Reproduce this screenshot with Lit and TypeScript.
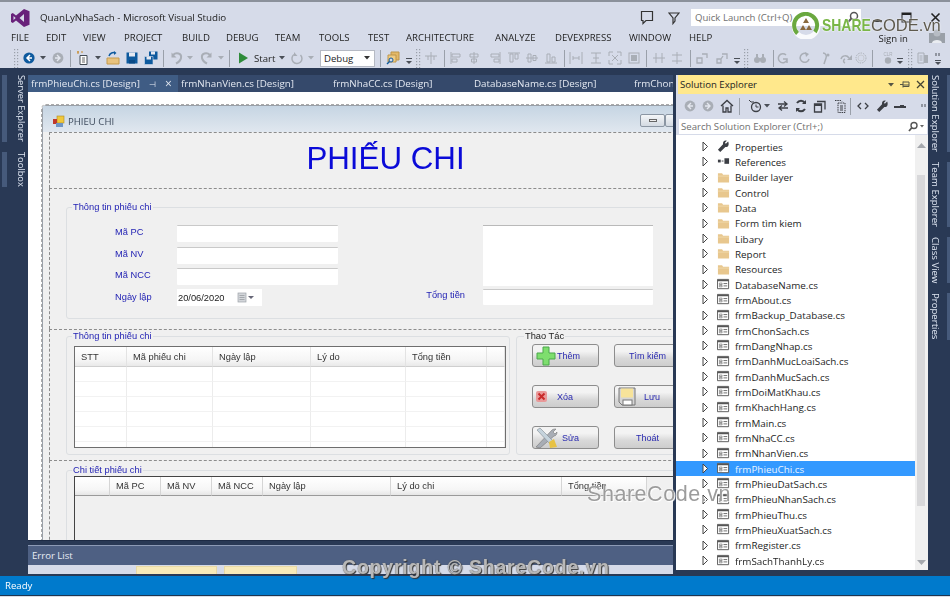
import { LitElement, html, css, svg } from "lit";
import { customElement } from "lit/decorators.js";

const ic = (body: unknown, w = 14, h = 14, vb = "0 0 14 14") =>
  html`<svg width=${w} height=${h} viewBox=${vb} fill="none">${body}</svg>`;

const G = "#a9aeb6", D = "#4a4f57", B = "#0e5a9e", S = "#3c3f45";

const icons: Record<string, unknown> = {
  grip: ic(svg`<g fill="#9aa0aa">${[1, 4, 7, 10, 13, 16, 19].map((y) => svg`<rect x="2" y=${y} width="1.2" height="1.2"/><rect x="5" y=${y} width="1.2" height="1.2"/>`)}</g>`, 8, 20, "0 0 8 20"),
  sep: ic(svg`<rect x="1" y="0" width="1" height="17" fill="#9aa0aa"/>`, 3, 17, "0 0 3 17"),
  arrow: ic(svg`<path d="M1 2h6L4 5.5z" fill="${D}"/>`, 8, 8, "0 0 8 8"),
  arrowG: ic(svg`<path d="M1 2h6L4 5.5z" fill="${G}"/>`, 8, 8, "0 0 8 8"),
  over: ic(svg`<rect x="1" y="7" width="6" height="1" fill="${D}"/><path d="M1 10h6L4 13z" fill="${D}"/>`, 8, 14, "0 0 8 14"),
  back: ic(svg`<circle cx="7" cy="7" r="5.6" fill="${B}"/><path d="M8 4L5 7l3 3M5 7h5" stroke="#fff" stroke-width="1.5"/>`),
  fwd: ic(svg`<circle cx="7" cy="7" r="5.4" fill="${G}"/><path d="M6 4l3 3-3 3M9 7H4" stroke="#e4e7ef" stroke-width="1.4"/>`),
  backG: ic(svg`<circle cx="7" cy="7" r="5.4" fill="${G}"/><path d="M8 4L5 7l3 3M5 7h5" stroke="#e4e7ef" stroke-width="1.4"/>`),
  newp: ic(svg`<path d="M4 4.500h7v9H4z" fill="#fff" stroke="#444c55"/><path d="M6 7h3M6 9h3M6 11h3" stroke="#666"/><path d="M1 1h2M2 0v3M5 1h2" stroke="#c78a2a"/>`),
  open: ic(svg`<path d="M1 7h12v6H1z" fill="#e8c27d" stroke="#c59a4d"/><path d="M3 5c1-3 4-4 6-3" stroke="${B}" stroke-width="1.500"/><path d="M8 0l2.500 2L8 4z" fill="${B}"/>`),
  save: ic(svg`<path d="M1.500 1.500h11v11h-11z" fill="${B}"/><path d="M4 1.500h6v4H4z" fill="#e5e9f2"/><rect x="4" y="9" width="6" height="3.500" fill="#0a4a86"/>`),
  saveall: ic(svg`<path d="M5 .5h8.500v8H5z" fill="${B}"/><path d="M7 .5h4v3H7z" fill="#e5e9f2"/><path d="M.5 5.500h8.500v8H.5z" fill="${B}" stroke="#d6dbe9" stroke-width=".6"/><path d="M2.500 5.500h4.500v3H2.500z" fill="#e5e9f2"/>`),
  undo: ic(svg`<path d="M3 4c3-3 9-2 8 3-.5 3-3 4.500-5 5.500" stroke="${G}" stroke-width="2"/><path d="M1.500 1.500v5h5z" fill="${G}"/>`),
  redo: ic(svg`<path d="M11 4C8 1 2 2 3 7c.5 3 3 4.500 5 5.500" stroke="${G}" stroke-width="2"/><path d="M12.500 1.500v5h-5z" fill="${G}"/>`),
  play: ic(svg`<path d="M3 1.500l9 5.500-9 5.500z" fill="#2e8b3a"/>`),
  refresh: ic(svg`<path d="M10.500 4a5 5 0 1 1-6.500-.5" stroke="${G}" stroke-width="1.500"/><path d="M4 1v4h3.500z" fill="${G}"/>`),
  find: ic(svg`<path d="M5 1h8v8H5z" fill="#e3b868" stroke="#bd9548"/><path d="M2 4h8v7H2z" fill="#eecb85" stroke="#bd9548"/><circle cx="5" cy="9" r="2" fill="#d6dbe9" stroke="${B}"/><path d="M3.500 10.500L1 13" stroke="${B}" stroke-width="1.500"/>`),
  hcross: ic(svg`<path d="M1 5h12M7 1v12M4 5v4M10 5v4" stroke="${G}"/>`),
  al1: ic(svg`<path d="M2 1v12" stroke="${G}"/><path d="M3 3h8v3H3zM3 8h5v3H3z" stroke="${G}"/>`),
  al2: ic(svg`<path d="M7 1v12" stroke="${G}"/><path d="M3 3h8v3H3zM4.500 8h5v3h-5z" stroke="${G}"/>`),
  al3: ic(svg`<path d="M12 1v12" stroke="${G}"/><path d="M3 3h8v3H3zM6 8h5v3H6z" stroke="${G}"/>`),
  al4: ic(svg`<path d="M1 2h12" stroke="${G}"/><path d="M3 3v8h3V3zM8 3v5h3V3z" stroke="${G}"/>`),
  al5: ic(svg`<path d="M1 7h12" stroke="${G}"/><path d="M3 3v8h3V3zM8 4.500v5h3v-5z" stroke="${G}"/>`),
  al6: ic(svg`<path d="M1 12h12" stroke="${G}"/><path d="M3 3v8h3V3zM8 6v5h3V6z" stroke="${G}"/>`),
  sz1: ic(svg`<path d="M1 1v12M13 1v12M4 7h6M4 5v4M10 5v4" stroke="${G}"/>`),
  sz2: ic(svg`<path d="M2 2h10M2 12h10M7 2v10" stroke="${G}"/><path d="M4 7h6" stroke="${G}"/>`),
  sz3: ic(svg`<path d="M1 1h4M1 1v4M13 1H9M13 1v4M1 13h4M1 13V9M13 13H9M13 13V9M4 4l6 6M10 4l-6 6" stroke="${G}"/>`),
  sz4: ic(svg`<rect x="2" y="2" width="10" height="10" stroke="${G}"/><rect x="4" y="4" width="6" height="6" fill="${G}"/>`),
  sp1: ic(svg`<path d="M4 2v10M10 2v10M1 7h12" stroke="${G}"/>`),
  sp2: ic(svg`<path d="M2 4h10M2 10h10M7 1v12" stroke="${G}"/>`),
  tab1: ic(svg`<path d="M2 7h5v5H2zM7 3h5v4" stroke="${G}" stroke-width="1.300"/>`),
  tab2: ic(svg`<path d="M2 8h4v4H2zM7 3h5v5M6 8l2-3" stroke="${G}" stroke-width="1.300"/>`),
  bino: ic(svg`<circle cx="4" cy="9" r="3" fill="${G}"/><circle cx="10" cy="9" r="3" fill="${G}"/><path d="M3 3h2v5H3zM9 3h2v5H9zM5 7h4v2H5z" fill="${G}"/>`),
  g1: ic(svg`<path d="M10 4a4.500 4.500 0 1 0 1 5M7 8h4v4" stroke="${G}" stroke-width="1.500"/>`),
  g2: ic(svg`<path d="M10 3a4.500 4.500 0 1 0 2 5" stroke="${G}" stroke-width="1.500"/><path d="M8 1l4 2-3 3z" fill="${G}"/>`),
  g3: ic(svg`<path d="M6 2a3.500 3.500 0 0 1 3 5L7 13" stroke="${G}" stroke-width="1.500"/><circle cx="11" cy="4" r="1.500" fill="${G}"/>`),
  g4: ic(svg`<path d="M2 8c1-4 6-4 8-1M6 12c-2-1-2-3 0-4" stroke="${G}" stroke-width="1.500"/><path d="M13 4v5H8z" fill="${G}"/>`),
  g5: ic(svg`<circle cx="7" cy="7" r="5" stroke="${G}" stroke-dasharray="1.500 1"/><circle cx="7" cy="7" r="3" stroke="#c6cad2"/>`),
  clr: ic(svg`<text x="7" y="4.500" font-size="4.500" font-family="Liberation Sans" fill="${G}" text-anchor="middle">CLR</text><circle cx="7" cy="9.500" r="3.200" fill="${G}"/>`),
  doc2: ic(svg`<path d="M2 2h6v10H2z" stroke="${G}"/><path d="M8 4h4v8H8z" fill="${G}"/><path d="M3.500 5h3M3.500 7h3M3.500 9h3" stroke="${G}"/>`),
  dots: ic(svg`<path d="M2 2v3M5 2v3" stroke="${D}"/><rect x="1" y="9" width="6" height="1" fill="${D}"/><path d="M1 11h6l-3 3z" fill="${D}"/>`, 8, 15, "0 0 8 15"),
  home: ic(svg`<path d="M1 7l6-5.500L13 7M3 6.500V13h3V9h2v4h3V6.500" stroke="${S}" stroke-width="1.300"/>`),
  hist: ic(svg`<circle cx="8" cy="8" r="4.500" stroke="${S}" stroke-width="1.300"/><path d="M8 5.500V8h2.500M1 1l2 2h3" stroke="${S}"/>`),
  sync: ic(svg`<path d="M2 5h8M8 2.500L11 5 8 7.500M12 9H4M6 6.500L3 9l3 2.500" stroke="${S}" stroke-width="1.300"/>`),
  rf: ic(svg`<path d="M3 4c2-3 6-3 8 0M11 10c-2 3-6 3-8 0" stroke="${S}" stroke-width="2"/><path d="M12 1v4H8zM2 13V9h4z" fill="${S}"/>`),
  cp: ic(svg`<path d="M1.500 5h7v8h-7zM4 2.500h8v8" stroke="${S}" stroke-width="1.300"/><path d="M2 5h6v2H2z" fill="${S}"/>`),
  docs: ic(svg`<path d="M2 1.500h6l1 1M5 4h7v9.500H5z" stroke="${S}" stroke-dasharray="1.500 .8"/><path d="M7 7h3M7 9h3M7 11h3" stroke="${S}"/>`),
  code: ic(svg`<path d="M5 4L2 7l3 3M9 4l3 3-3 3" stroke="${S}" stroke-width="1.300"/>`),
  dash: ic(svg`<rect x="1" y="7" width="12" height="2" fill="${S}"/><rect x="7" y="6" width="4" height="1" fill="${S}"/>`),
  quote: ic(svg`<path d="M2 2v3M5 2v3" stroke="${D}"/>`, 8, 8, "0 0 8 8"),
};

const wrench = ic(svg`<path d="M12 1.500L9.500 4 8.500 3l2-2.200C8 0 6 2 6.500 4.500L1 10.500 3.500 13 9 7.500c3 .5 4.500-2.500 3-6z" fill="${S}"/>`, 13, 13);
icons.wr = wrench;

const toolbar: [number, string][] = [
  [12, "grip"], [22, "back"], [39, "arrow"], [51, "fwd"], [69, "sep"], [76, "newp"], [94, "arrow"], [106, "open"], [125, "save"], [144, "saveall"], [162, "sep"],
  [170, "undo"], [186, "arrowG"], [199, "redo"], [217, "arrowG"], [228, "sep"], [236, "play"],
];
const toolbar2: [number, string][] = [[278, "arrow"], [290, "refresh"], [307, "arrowG"]];
const toolbar3: [number, string][] = [
  [379, "sep"], [386, "find"], [405, "over"], [414, "grip"], [424, "hcross"], [443, "sep"], [449, "al1"], [467, "al2"], [488, "al3"], [507, "al4"], [525, "al5"], [544, "al6"],
  [563, "sep"], [569, "sz1"], [589, "sz2"], [608, "sz3"], [627, "sz4"], [645, "sep"], [652, "sp1"], [670, "sp2"], [689, "sep"], [695, "tab1"], [715, "tab2"], [733, "over"], [742, "grip"], [753, "bino"],
  [772, "sep"], [776, "g1"], [797, "g2"], [817, "g3"], [839, "g4"], [854, "g5"], [871, "sep"], [881, "clr"], [896, "over"], [906, "grip"], [916, "doc2"], [934, "dots"],
];
const seBar: [number, string][] = [
  [683, "backG"], [701, "fwd"], [720, "home"], [738, "sep"], [748, "hist"], [763, "arrow"], [776, "sync"], [794, "rf"], [813, "cp"], [833, "docs"], [849, "sep"], [856, "code"], [876, "wr"], [893, "dash"], [920, "quote"],
];

const menus: [string, number][] = [["FILE", 35], ["EDIT", 37], ["VIEW", 41], ["PROJECT", 58], ["BUILD", 44], ["DEBUG", 49], ["TEAM", 44], ["TOOLS", 49], ["TEST", 38], ["ARCHITECTURE", 89], ["ANALYZE", 60], ["DEVEXPRESS", 74], ["WINDOW", 60], ["HELP", 40]];

const folders = ["Builder layer", "Control", "Data", "Form tìm kiem", "Libary", "Report", "Resources"];
const files = ["DatabaseName.cs", "frmAbout.cs", "frmBackup_Database.cs", "frmChonSach.cs", "frmDangNhap.cs", "frmDanhMucLoaiSach.cs", "frmDanhMucSach.cs", "frmDoiMatKhau.cs", "frmKhachHang.cs", "frmMain.cs", "frmNhaCC.cs", "frmNhanVien.cs", "frmPhieuChi.cs", "frmPhieuDatSach.cs", "frmPhieuNhanSach.cs", "frmPhieuThu.cs", "frmPhieuXuatSach.cs", "frmRegister.cs", "frmSachThanhLy.cs"];

const refs = ic(svg`<rect x="1" y="5" width="3" height="3" fill="${S}"/><rect x="5" y="6" width="2" height="1" fill="${S}"/><rect x="8" y="3.500" width="5" height="6" fill="${S}"/>`, 13, 13);
const folder = ic(svg`<path d="M1 2.500h4.500l1 1.500H13v8.500H1z" fill="#e8c78e"/><path d="M1 5.500h12" stroke="#f0d9ad"/>`, 13, 13);
const formIcon = ic(svg`<path d="M.5 1.500h12v10H.5z" fill="#fff" stroke="#555"/><path d="M.5 2h12v1.500H.5z" fill="#555"/><path d="M2.500 5.500h3v1.500h-3zM2.500 8h3v1.500h-3z" stroke="#666" stroke-width=".7"/><path d="M7 6h4M7 8.500h4" stroke="#666"/>`, 13, 13);
const expand = ic(svg`<path d="M2 1l4.500 4.500L2 10z" fill="#fff" stroke="#444"/>`, 8, 11, "0 0 8 11");

@customElement("app-root")
export class AppRoot extends LitElement {
  static styles = css`
    :host { display: block; width: 950px; height: 597px; overflow: hidden; position: relative; background: #293955; font-family: "Open Sans", "Noto Sans", sans-serif; color: #1e1e1e; }
    .win { width: 950px; height: 597px; display: flex; flex-direction: column; filter: blur(0.35px); }
    .top { height: 66px; background: #d6dbe9; border-top: 2px solid #8b919b; display: flex; flex-direction: column; flex: none; }
    .titlebar { height: 25px; padding-top: 6px; display: flex; align-items: center; position: relative; box-sizing: border-box; }
    .logo { margin-left: 11px; width: 19px; height: 18px; }
    .ttl { margin-left: 10px; font-size: 9.8px; letter-spacing: -0.05px; color: #1e1e1e; }
    .tbright { margin-left: auto; display: flex; align-items: center; }
    .ql { width: 170px; height: 17px; background: #fff; box-sizing: border-box; font-size: 9.6px; color: #717171; padding-left: 4px; display: flex; align-items: center; justify-content: space-between; padding-right: 2px; margin-left: 11px; margin-right: 11px; }
    .winbtns { display: flex; gap: 18px; padding-right: 9px; }
    .winbtns svg { display: block; }
    .menu { height: 21px; display: flex; align-items: center; padding-left: 11px; font-size: 9.6px; color: #1e1e1e; position: relative; }
    .menu span { flex: none; }
    .menu .signin { margin-left: auto; margin-right: 42px; margin-top: 2px; }
    .avatar { position: absolute; right: 5px; top: 2px; }
    .tools { height: 20px; display: flex; align-items: center; position: relative; }
    .ti { flex: none; display: flex; align-items: center; }
    .ti svg { display: block; }
    .pad { flex: none; }
    .start { flex: none; font-size: 9.6px; width: 24px; }
    .combo { flex: none; box-sizing: border-box; width: 55px; height: 17px; background: #fff; border: 1px solid #b6bac4; font-size: 9.6px; display: flex; align-items: center; justify-content: space-between; padding: 0 3px; }
    .main { flex: 1; display: flex; min-height: 0; }
    .rail { background: #293955; flex: none; color: #dfe6f2; display: flex; flex-direction: column; padding-top: 7px; }
    .rail.l { width: 28px; align-items: stretch; gap: 10px; font-size: 9.3px; }
    .rail.r { width: 22px; gap: 10px; font-size: 9.6px; }
    .rt { writing-mode: vertical-rl; display: block; line-height: 13px; white-space: nowrap; }
    .rail.l .rt { border-left: 5px solid #465a7b; padding-left: 1px; margin-left: 2px; }
    .rail.r .rt { border-right: 3px solid #465a7b; padding-right: 5px; box-sizing: border-box; width: 22px; }
    .center { width: 645px; padding-top: 7px; flex: none; display: flex; flex-direction: column; box-sizing: border-box; }
    .tabs { height: 17px; background: #35496b; display: flex; align-items: center; font-size: 9.8px; color: #e4e9f2; flex: none; overflow: hidden; white-space: nowrap; }
    .tab { flex: none; box-sizing: border-box; padding-left: 3px; height: 17px; display: flex; align-items: center; }
    .tab.on { background: #3f5c84; width: 150px; }
    .pin { margin-left: 9px; font-size: 8px; }
    .cl { margin-left: 9px; font-size: 12px; line-height: 10px; }
    .design { height: 448px; background: #fff; flex: none; overflow: hidden; padding: 13px 0 0 14px; box-sizing: border-box; }
    .form { width: 760px; height: 500px; background: #f0f0f0; border: 1px solid #9aa0a8; border-radius: 4px 0 0 0; outline: 1px dashed #aaa; box-sizing: border-box; font-family: "Liberation Sans", Arial, sans-serif; font-size: 9.3px; }
    .fhead { height: 26px; background: linear-gradient(#c6d5e3, #e0e7ef); display: flex; align-items: center; padding: 4px 0 0 9px; gap: 3px; color: #3d4a5c; font-family: "Open Sans", sans-serif; font-size: 9.6px; position: relative; box-sizing: border-box; }
    .fbtn { position: absolute; left: 597px; top: 8px; width: 25px; height: 13px; border: 1px solid #8b96a3; border-radius: 2px; background: linear-gradient(#f4f6f8, #d3dae2); display: flex; align-items: center; justify-content: center; box-sizing: border-box; }
    .fbtn::after { content: ""; width: 8px; height: 3px; border: 1px solid #666; box-sizing: border-box; background: #eee; }
    .fbtn.b2 { left: 622px; }
    .fbody { padding-left: 6px; }
    .panel { border: 1px dashed #8c8c8c; border-right: 0; box-sizing: border-box; border-bottom: 0; }
    .p1 { height: 56px; display: block; }
    .heading { width: 671px; text-align: center; color: #0a0ad8; font-size: 31.3px; line-height: 52px; }
    .p2 { height: 141px; padding: 12px 0 0 16px; }
    .p3 { height: 131px; padding: 0 0 0 16px; display: flex; gap: 6px; }
    .p4 { height: 90px; padding: 3px 0 0 16px; }
    fieldset { margin: 0; border: 1px solid #dcdfe2; border-radius: 3px; box-sizing: border-box; padding: 0; min-width: 0; }
    legend { font-size: 9.3px; line-height: 12px; padding: 0 1px; margin-left: 5px; color: #2323b4; }
    legend.dk { color: #222; margin-left: 7px; }
    .g1 { width: 650px; height: 118px; }
    .g1i { padding: 12px 0 0 48px; display: grid; grid-template-columns: 62px 161px 145px 170px; grid-template-rows: 22px 21px 21px 17px; }
    .lb { color: #2323b4; line-height: 13px; padding-top: 1px; }
    .lb.r4 { padding-top: 2px; }
    .tx { background: #fff; height: 17px; border-top: 1px solid #c9c9c9; border-radius: 1px; box-sizing: border-box; }
    .area { grid-column: 4; grid-row: 1 / 4; height: 61px; background: #fff; border-top: 1px solid #b9b9b9; box-sizing: border-box; }
    .date { width: 85px; height: 17px; background: #fff; display: flex; align-items: center; color: #222; padding-left: 1px; box-sizing: border-box; gap: 12px; }
    .date svg { display: block; }
    .lb.tl { text-align: right; padding: 0 18px 0 0; grid-column: 3; grid-row: 4; }
    .r4 { grid-row: 4; }
    .g2 { width: 444px; height: 125px; flex: none; }
    .g2i { padding: 4px 0 0 7px; }
    .g3 { width: 170px; height: 125px; flex: none; }
    .g3i { padding: 2px 0 0 15px; display: grid; grid-template-columns: 67px 67px; column-gap: 15px; grid-template-rows: 23px 23px 23px; row-gap: 18px; }
    table { border-collapse: separate; border-spacing: 0; table-layout: fixed; background: #fff; color: #333; }
    .t1 { width: 432px; height: 102px; border: 1px solid #6e6e6e; }
    td, th { padding: 0 0 0 6px; font-weight: 400; text-align: left; border-right: 1px solid #ececec; border-bottom: 1px solid #f2f2f2; box-sizing: border-box; height: 15px; }
    th { height: 20px; background: linear-gradient(#fff, #f5f5f5 70%, #e9e9e9); border-bottom: 1px solid #cfcfcf; border-right: 1px solid #e3e3e3; white-space: nowrap; overflow: hidden; }
    .t1 tr.f td { height: auto; border-bottom: 0; }
    .btn { box-sizing: border-box; border: 1px solid #8d8d8d; border-radius: 3px; background: linear-gradient(#f3f3f3 30%, #d8d8d8 65%, #cdcdcd); color: #2a2ab0; display: flex; align-items: center; font-size: 9px; }
    .btn.c { justify-content: center; }
    .btn svg { display: block; flex: none; }
    .b-add { padding-left: 3px; gap: 1px; }
    .b-del { padding-left: 3px; gap: 10px; }
    .b-save { padding-left: 3px; gap: 8px; }
    .b-edit { padding-left: 1px; gap: 4px; }
    .dg { margin-left: 7px; width: 700px; height: 70px; background: #f0f0f0; border-left: 1px solid #444; border-top: 1px solid #444; display: block; }
    .dg th { height: 19px; background: linear-gradient(#fff, #f6f6f6 70%, #e6e6e6); border-bottom: 1px solid #9a9a9a; border-right: 1px solid #d5d5d5; }
    .g4 { width: 650px; height: 90px; overflow: hidden; }
    .gap1 { height: 5px; background: #293955; flex: none; border-top: 1px solid #1c2a44; box-sizing: border-box; }
    .err { height: 20px; background: #4e6083; border-top: 1px solid #8c9ab5; box-sizing: border-box; color: #e8edf5; font-size: 9.6px; display: flex; align-items: center; padding-left: 4px; flex: none; }
    .errl { height: 9px; background: #d6dbe9; flex: none; display: flex; padding-left: 108px; gap: 7px; }
    .errl i { display: block; height: 8px; background: #f8eab9; border: 1px solid #e8d9a4; border-bottom: 0; box-sizing: border-box; margin-top: 1px; }
    .errl i:nth-child(1) { width: 81px; }
    .errl i:nth-child(2) { width: 73px; }
    .se { width: 255px; flex: none; box-sizing: border-box; padding: 7px 0 0 3px; display: flex; flex-direction: column; height: 507px; }
    .sein { background: #d6dbe9; flex: none; height: 495px; display: flex; flex-direction: column; }
    .setitle { height: 19px; background: #ffe88c; flex: none; display: flex; align-items: center; font-size: 9.6px; padding-left: 2px; color: #222; margin-left: 2px; }
    .setitle .ctl { margin-left: auto; display: flex; align-items: center; gap: 5px; padding-right: 3px; }
    .setitle svg { display: block; }
    .setb { height: 24px; flex: none; display: flex; align-items: center; margin-left: 2px; }
    .search { height: 17px; background: #fff; flex: none; margin-left: 2px; font-size: 9.6px; color: #6f6f6f; display: flex; align-items: center; padding: 0 3px; justify-content: space-between; box-shadow: inset 0 0 0 1px #d6dbe9; }
    .tree { flex: 1; display: flex; min-height: 0; background: #fff; }
    .rows { flex: 1; padding-top: 4px; min-width: 0; font-size: 9.85px; color: #1e1e1e; }
    .row { height: 15.33px; display: flex; align-items: center; padding-left: 25px; white-space: nowrap; }
    .row svg { display: block; }
    .row .ar { width: 16px; flex: none; }
    .row .ico { width: 18px; flex: none; }
    .row.sel { background: #3399ff; color: #eaf4ff; }
    .sb { width: 13px; flex: none; background: #f0f0f0; display: flex; flex-direction: column; align-items: center; justify-content: space-between; position: relative; padding: 8px 0 5px; box-sizing: border-box; }
    .thumb { position: absolute; left: 2px; right: 3px; top: 40px; height: 331px; background: #d8d8da; }
    .status { height: 19px; flex: none; background: #007acc; color: #fff; font-size: 9.6px; display: flex; align-items: center; padding-left: 5px; }
    .foot { height: 2px; flex: none; background: #d9dde6; border-top: 1px solid #1d3550; box-sizing: border-box; }
    .wm { position: absolute; font-family: "Liberation Sans", Arial, sans-serif; white-space: nowrap; }
    .wm1 { left: 587px; top: 482px; font-size: 21.5px; letter-spacing: .55px; color: #9c9c9c; text-shadow: 0 0 2px #fff, 1px 1px 1px #fff; }
    .wm2 { left: 342px; top: 556px; font-size: 19.5px; font-weight: 700; letter-spacing: .8px; color: #b8b8b8; text-shadow: 0 0 1px #555, 1px 1px 1px #333; }
    .mark { position: absolute; left: 792px; top: 12px; display: flex; align-items: center; font-family: "Liberation Sans", Arial, sans-serif; height: 27px; }
    .mark b { display: inline-block; color: #7ab648; font-size: 17px; font-weight: 700; text-shadow: 0 0 2px #fff, 0 0 2px #fff; transform: scaleX(.82); transform-origin: left center; margin-right: -10.5px; }
    .mark span { color: #5e5a4e; font-size: 16.5px; text-shadow: 0 0 2px #fff; }
  `;

  private ti(list: [number, string][], end: number) {
    return list.map(([x, n], i) => {
      const next = i + 1 < list.length ? list[i + 1][0] : end;
      return html`<span class="ti" style="width:${next - x}px">${icons[n]}</span>`;
    });
  }

  render() {
    const rows = (n: number) => Array.from({ length: n });
    return html`
      <div class="win">
        <div class="top">
          <div class="titlebar">
            <svg class="logo" viewBox="0 0 19 18"><path d="M13 0l5.500 2.200v13.600L13 18l-8-6.500L1.800 14 0 13V5l1.800-1L5 6.500zM13 5L8.500 9l4.500 4zM2.500 7v4l2.200-2z" fill="#68217a" fill-rule="evenodd"/></svg>
            <span class="ttl">QuanLyNhaSach - Microsoft Visual Studio</span>
            <span class="tbright">
              <svg width="14" height="15" viewBox="0 0 14 15" fill="none"><path d="M1.500 1.500h11v9H6l-3 3v-3H1.500z" stroke="#333" stroke-width="1.200"/></svg>
              <svg style="margin-left:14px" width="12" height="14" viewBox="0 0 12 14" fill="none"><path d="M1 2h10L7 7v3L5 12.500V7z" stroke="#333" stroke-width="1.200"/></svg>
              <span class="ql">Quick Launch (Ctrl+Q)<svg width="13" height="13" viewBox="0 0 13 13" fill="none"><circle cx="8" cy="5" r="3.500" stroke="#555" stroke-width="1.500"/><path d="M5.500 7.500L1.500 11.500" stroke="#555" stroke-width="2"/></svg></span>
              <span class="winbtns">
                <svg width="11" height="11" viewBox="0 0 11 11"><rect x="1" y="8" width="9" height="2" fill="#222"/></svg>
                <svg width="11" height="11" viewBox="0 0 11 11" fill="none"><rect x="1" y="1" width="9" height="9" stroke="#222"/><rect x="1" y="1" width="9" height="2" fill="#222"/></svg>
                <svg width="11" height="11" viewBox="0 0 11 11" fill="none"><path d="M1.500 1.500l8 8M9.500 1.500l-8 8" stroke="#222" stroke-width="1.600"/></svg>
              </span>
            </span>
          </div>
          <div class="menu">
            ${menus.map(([m, w]) => html`<span style="width:${w}px">${m}</span>`)}
            <span class="signin">Sign in</span>
            <svg class="avatar" width="16" height="14" viewBox="0 0 16 14"><rect x="0" y="4" width="16" height="10" fill="#9aa0a8"/><circle cx="8" cy="4" r="3.500" fill="#b7bcc4"/><path d="M3 14c0-4 10-4 10 0z" fill="#e9ecf1"/></svg>
          </div>
          <div class="tools">
            <span class="pad" style="width:12px"></span>
            ${this.ti(toolbar, 254)}
            <span class="start">Start</span>
            ${this.ti(toolbar2, 320)}
            <span class="combo">Debug<svg width="8" height="8" viewBox="0 0 8 8"><path d="M1 2h6L4 5.500z" fill="#333"/></svg></span>
            <span class="pad" style="width:4px"></span>
            ${this.ti(toolbar3, 942)}
          </div>
        </div>
        <div class="main">
          <div class="rail l">
            <span class="rt">Server Explorer</span>
            <span class="rt">Toolbox</span>
          </div>
          <div class="center">
            <div class="tabs">
              <span class="tab on">frmPhieuChi.cs [Design]<span class="pin">⊣</span><span class="cl">×</span></span>
              <span class="tab" style="width:152px">frmNhanVien.cs [Design]</span>
              <span class="tab" style="width:141px">frmNhaCC.cs [Design]</span>
              <span class="tab" style="width:160px">DatabaseName.cs [Design]</span>
              <span class="tab">frmChonSach.cs</span>
            </div>
            <div class="design">
              <div class="form">
                <div class="fhead">
                  <svg width="13" height="13" viewBox="0 0 13 13"><rect x="5" y="1" width="7" height="7" fill="#f0c83c" stroke="#b08a20" stroke-width=".6"/><rect x="1" y="4" width="4" height="5" fill="#c0392b"/><rect x="4" y="8" width="7" height="4" fill="#6f95c4"/></svg>
                  <span>PHIEU CHI</span>
                  <span class="fbtn"></span><span class="fbtn b2"></span>
                </div>
                <div class="fbody">
                  <div class="panel p1"><div class="heading">PHIẾU CHI</div></div>
                  <div class="panel p2">
                    <fieldset class="g1">
                      <legend>Thông tin phiếu chi</legend>
                      <div class="g1i">
                        <span class="lb">Mã PC</span><span class="tx"></span><span class="area"></span>
                        <span class="lb" style="grid-row:2;grid-column:1">Mã NV</span><span class="tx" style="grid-row:2;grid-column:2"></span>
                        <span class="lb" style="grid-row:3;grid-column:1">Mã NCC</span><span class="tx" style="grid-row:3;grid-column:2"></span>
                        <span class="lb r4" style="grid-column:1">Ngày lập</span>
                        <span class="date r4" style="grid-column:2">20/06/2020
                          <svg width="18" height="11" viewBox="0 0 18 11"><rect x="1" y="1" width="8" height="9" fill="#d3d6da" stroke="#9ea3a9" stroke-width=".7"/><path d="M2.500 3.500h5M2.500 5.500h5M2.500 7.500h5" stroke="#8f949a" stroke-width=".7"/><path d="M11 4h6l-3 3z" fill="#667"/></svg>
                        </span>
                        <span class="lb tl">Tổng tiền</span>
                        <span class="tx r4" style="grid-column:4;height:16px"></span>
                      </div>
                    </fieldset>
                  </div>
                  <div class="panel p3">
                    <fieldset class="g2">
                      <legend>Thông tin phiếu chi</legend>
                      <div class="g2i">
                        <table class="t1">
                          <colgroup><col style="width:52px"/><col style="width:86px"/><col style="width:98px"/><col style="width:95px"/><col style="width:81px"/><col style="width:18px"/></colgroup>
                          <tr><th>STT</th><th>Mã phiếu chi</th><th>Ngày lập</th><th>Lý do</th><th>Tổng tiền</th><th></th></tr>
                          ${rows(5).map(() => html`<tr><td></td><td></td><td></td><td></td><td></td><td></td></tr>`)}
                          <tr class="f"><td></td><td></td><td></td><td></td><td></td><td></td></tr>
                        </table>
                      </div>
                    </fieldset>
                    <fieldset class="g3">
                      <legend class="dk">Thao Tác</legend>
                      <div class="g3i">
                        <span class="btn b-add"><svg width="20" height="20" viewBox="0 0 20 20"><path d="M7 1h6v6h6v6h-6v6H7v-6H1V7h6z" fill="#7ede6e" stroke="#4aa84a"/></svg>Thêm</span>
                        <span class="btn c">Tìm kiếm</span>
                        <span class="btn b-del"><svg width="11" height="11" viewBox="0 0 11 11"><rect x="0" y="0" width="11" height="11" rx="2" fill="#e99a9a"/><path d="M2.500 2.500l6 6M8.500 2.500l-6 6" stroke="#c92b2b" stroke-width="2"/></svg>Xóa</span>
                        <span class="btn b-save"><svg width="18" height="19" viewBox="0 0 18 19"><path d="M1 1h16v17H4l-3-3z" fill="#d5d5d5" stroke="#777"/><rect x="3" y="1.500" width="12" height="9" fill="#f7e39a"/><rect x="5" y="13" width="9" height="5" fill="#fff" stroke="#777"/></svg>Lưu</span>
                        <span class="btn b-edit"><svg width="24" height="22" viewBox="0 0 24 22"><path d="M2 20L18 3c1-1 3-1 4-1l-3 3 2 2 2-2c0 2-1 4-3 4L6 21z" fill="#a8adb5" stroke="#777" stroke-width=".6"/><path d="M3 3l3-2 14 14-3 3z" fill="#c5d3dc" stroke="#7f8a92" stroke-width=".6"/><path d="M15 15l5-3 3 8-7 1z" fill="#e7c244"/></svg>Sửa</span>
                        <span class="btn c">Thoát</span>
                      </div>
                    </fieldset>
                  </div>
                  <div class="panel p4">
                    <fieldset class="g4">
                      <legend>Chi tiết phiếu chi</legend>
                      <table class="dg">
                        <colgroup><col style="width:35px"/><col style="width:51px"/><col style="width:51px"/><col style="width:51px"/><col style="width:128px"/><col style="width:171px"/><col style="width:85px"/></colgroup>
                        <tr><th></th><th>Mã PC</th><th>Mã NV</th><th>Mã NCC</th><th>Ngày lập</th><th>Lý do chi</th><th>Tổng tiền</th></tr>
                      </table>
                    </fieldset>
                  </div>
                </div>
              </div>
            </div>
            <div class="gap1"></div>
            <div class="err">Error List</div>
            <div class="errl"><i></i><i></i></div>
          </div>
          <div class="se">
            <div class="sein">
              <div class="setitle">Solution Explorer
                <span class="ctl">
                  <svg width="8" height="8" viewBox="0 0 8 8"><path d="M1 2h6L4 5.500z" fill="#554"/></svg>
                  <svg width="11" height="9" viewBox="0 0 11 9" fill="none"><path d="M0 4.500h3M3 1.500v6M3 2h6v4.500H3M3 5h6" stroke="#554"/></svg>
                  <svg width="9" height="9" viewBox="0 0 9 9" fill="none"><path d="M1 1l7 7M8 1L1 8" stroke="#443" stroke-width="1.300"/></svg>
                </span>
              </div>
              <div class="setb">
                <span class="pad" style="width:5px"></span>
                ${this.ti(seBar, 928)}
              </div>
              <div class="search">Search Solution Explorer (Ctrl+;)
                <svg width="17" height="11" viewBox="0 0 17 11" fill="none"><circle cx="6" cy="4.500" r="3" stroke="#555" stroke-width="1.400"/><path d="M4 6.500L1 10" stroke="#555" stroke-width="1.800"/><path d="M12 4h4l-2 2.500z" fill="#666"/></svg>
              </div>
              <div class="tree">
                <div class="rows">
                  <div class="row"><span class="ar">${expand}</span><span class="ico">${wrench}</span>Properties</div>
                  <div class="row"><span class="ar">${expand}</span><span class="ico">${refs}</span>References</div>
                  ${folders.map((f) => html`<div class="row"><span class="ar">${expand}</span><span class="ico">${folder}</span>${f}</div>`)}
                  ${files.map((f) => html`<div class="row ${f === "frmPhieuChi.cs" ? "sel" : ""}"><span class="ar">${expand}</span><span class="ico">${formIcon}</span>${f}</div>`)}
                </div>
                <div class="sb">
                  <svg width="9" height="6" viewBox="0 0 9 6"><path d="M0 5h9L4.500 0z" fill="#a5a8ad"/></svg>
                  <span class="thumb"></span>
                  <svg width="9" height="6" viewBox="0 0 9 6"><path d="M0 1h9L4.500 6z" fill="#a5a8ad"/></svg>
                </div>
              </div>
            </div>
          </div>
          <div class="rail r">
            <span class="rt">Solution Explorer</span>
            <span class="rt">Team Explorer</span>
            <span class="rt">Class View</span>
            <span class="rt">Properties</span>
          </div>
        </div>
        <div class="status">Ready</div>
        <div class="foot"></div>
      </div>
      <div class="mark">
        <svg width="30" height="27" viewBox="0 0 30 27" fill="none"><circle cx="14" cy="13.500" r="12" stroke="#fff" stroke-width="5" opacity=".85"/><path d="M5.500 21.500A11.500 11.500 0 1 1 23 20" stroke="#6aa83f" stroke-width="4"/><path d="M14 6l3 5h-6zM8 18l3-5 3 5zM20 18l-3-5-3 5z" fill="#8a6a3f"/></svg>
        <b>SHARE</b><span>CODE.vn</span>
      </div>
      <div class="wm wm1">ShareCode.vn</div>
      <div class="wm wm2">Copyright © ShareCode.vn</div>
    `;
  }
}
